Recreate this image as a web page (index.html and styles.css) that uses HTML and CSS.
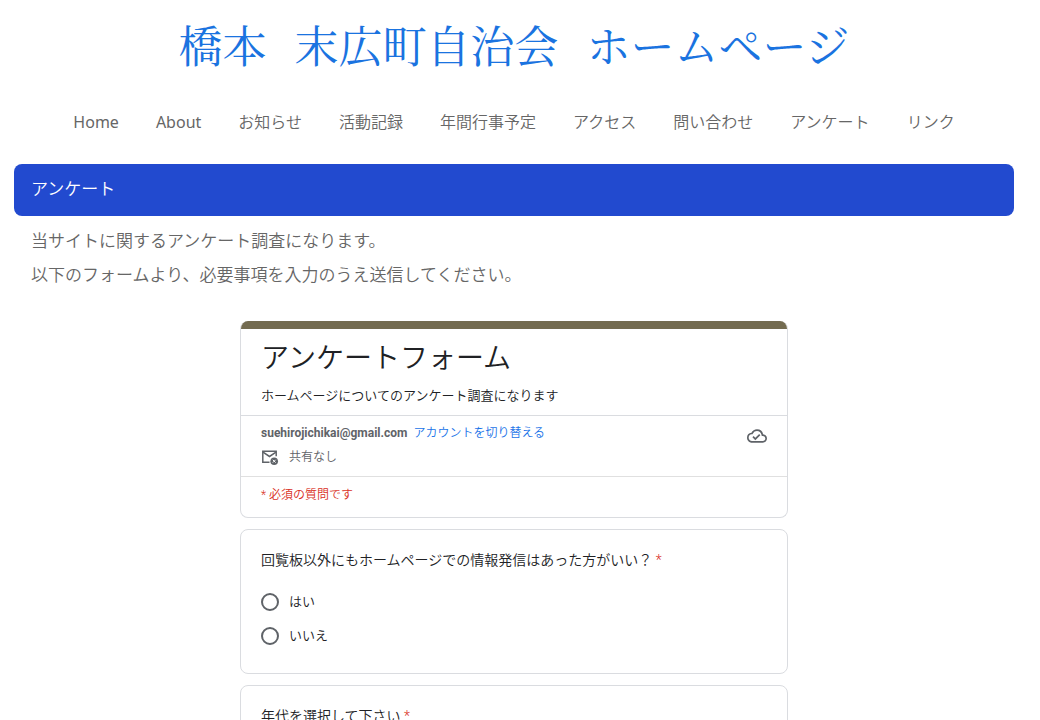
FILE: index.html
```html
<!DOCTYPE html>
<html lang="ja">
<head>
    <meta charset="UTF-8">
    <meta name="viewport" content="width=device-width, initial-scale=1">
    <title>アンケート | 橋本 末広町自治会 ホームページ</title>
    <link rel="stylesheet" href="styles.css">
</head>
<body>
    <header>
        <h1 class="site-title"><span>橋本</span> <span>末広町自治会</span> <span>ホームページ</span></h1>
        <nav class="menu">
            <a href="#" class="en">Home</a>
            <a href="#" class="en">About</a>
            <a href="#">お知らせ</a>
            <a href="#">活動記録</a>
            <a href="#">年間行事予定</a>
            <a href="#">アクセス</a>
            <a href="#">問い合わせ</a>
            <a href="#">アンケート</a>
            <a href="#">リンク</a>
        </nav>
    </header>

    <main>
        <h2 class="page-heading">アンケート</h2>
        <div class="intro">
            <p>当サイトに関するアンケート調査になります。</p>
            <p>以下のフォームより、必要事項を入力のうえ送信してください。</p>
        </div>

        <form class="survey">
            <!-- フォームの概要 -->
            <section class="card form-head">
                <div class="form-title">
                    <h3>アンケートフォーム</h3>
                    <p>ホームページについてのアンケート調査になります</p>
                </div>
                <div class="account">
                    <div>
                        <p class="account-row"><b>suehirojichikai@gmail.com</b><a href="#">アカウントを切り替える</a></p>
                        <p class="account-row share">
                            <svg width="18" height="18" viewBox="0 0 18 18" fill="none" stroke="#5f6368" stroke-width="1.5">
                                <path d="M8.5 14.3H1.8V3.3h13.4v5"/>
                                <path d="M2 4.2l6.5 4.3L15 4.2"/>
                                <circle cx="13.2" cy="13.2" r="3.8" fill="#5f6368" stroke="none"/>
                                <path d="M11.8 11.8l2.8 2.8M14.6 11.8L11.8 14.6" stroke="#fff" stroke-width="1"/>
                            </svg>
                            共有なし
                        </p>
                    </div>
                    <svg class="saved" width="20" height="20" viewBox="0 0 24 24" fill="#5f6368">
                        <path d="M19.35 10.04A7.49 7.49 0 0 0 12 4C9.11 4 6.6 5.64 5.35 8.04A5.994 5.994 0 0 0 0 14c0 3.31 2.69 6 6 6h13c2.76 0 5-2.24 5-5 0-2.64-2.05-4.78-4.65-4.96zM19 18H6c-2.21 0-4-1.79-4-4 0-2.05 1.53-3.76 3.56-3.97l1.07-.11.5-.95A5.469 5.469 0 0 1 12 6c2.62 0 4.88 1.86 5.39 4.43l.3 1.5 1.53.11A2.98 2.98 0 0 1 22 15c0 1.65-1.35 3-3 3zm-9-3.82l-2.09-2.09L6.5 13.5 10 17l6.01-6.01-1.41-1.41z"/>
                    </svg>
                </div>
                <p class="required-note">* 必須の質問です</p>
            </section>

            <!-- 質問 -->
            <fieldset class="card question">
                <legend>回覧板以外にもホームページでの情報発信はあった方がいい？ <span class="required">*</span></legend>
                <label><input type="radio" name="q1" value="yes">はい</label>
                <label><input type="radio" name="q1" value="no">いいえ</label>
            </fieldset>

            <fieldset class="card question">
                <legend>年代を選択して下さい <span class="required">*</span></legend>
            </fieldset>
        </form>
    </main>
</body>
</html>
```

FILE: styles.css
```css
* {
    box-sizing: border-box;
}
body {
    margin: 0;
    padding: 0 26px 0 14px;
    background: #fff;
    color: #666;
    font-family: "Noto Sans", "Noto Sans CJK JP", sans-serif;
    font-weight: 350;
}
h1, h2, h3, p {
    margin: 0;
    font-weight: 350;
}

/* ヘッダー */
.site-title {
    display: flex;
    justify-content: center;
    gap: 28px;
    padding-top: 12px;
    color: #1a73e0;
    font-family: "Noto Serif CJK JP", "Noto Sans CJK JP", serif;
    font-size: 44px;
    font-weight: 400;
    line-height: 64px;
}
.menu {
    display: flex;
    flex-wrap: wrap;
    justify-content: center;
    gap: 0 37px;
    padding: 34px 0 30px;
    font-size: 16px;
    line-height: 24px;
}
.menu a {
    color: #666;
    text-decoration: none;
}
.menu .en {
    font-weight: 400;
}

/* 本文 */
.page-heading {
    padding: 8px 17px 10px;
    border-radius: 8px;
    background: #224acf;
    color: #fff;
    font-size: 17px;
    line-height: 34px;
}
.intro {
    padding: 8px 17px 0;
    font-size: 17px;
    line-height: 34px;
}

/* アンケートフォーム */
.survey {
    max-width: 548px;
    margin: 29px auto 0;
    color: #202124;
    font-family: Roboto, "Noto Sans CJK JP", sans-serif;
    font-size: 13px;
}
.card {
    min-width: 0;
    margin: 0 0 11px;
    border: 1px solid #dadce0;
    border-radius: 8px;
    background: #fff;
}
.form-head {
    overflow: hidden;
    border-top: none;
}
.form-head::before {
    content: "";
    display: block;
    height: 8px;
    background: #736b50;
}
.form-title {
    padding: 10px 20px 9px;
}
.form-title h3 {
    font-size: 28px;
    line-height: 40px;
}
.form-title p {
    padding-top: 7px;
    line-height: 20px;
}
.account {
    display: flex;
    justify-content: space-between;
    padding: 5px 20px 7px;
    border-top: 1px solid #dadce0;
    border-bottom: 1px solid #e0e0e0;
    color: #5f6368;
    font-size: 12px;
}
.account-row {
    line-height: 24px;
}
.account b {
    margin-right: 6px;
    font-weight: 700;
}
.account a {
    color: #1a73e8;
    text-decoration: none;
}
.share {
    display: flex;
    align-items: center;
    gap: 10px;
}
.saved {
    margin-top: 5px;
}
.required-note {
    padding: 8px 20px 12px;
    color: #d93025;
    font-size: 12px;
    line-height: 20px;
}
.question {
    padding: 20px 20px 20px;
}
.question legend {
    float: left;
    width: 100%;
    margin-bottom: 15px;
    padding: 0;
    font-size: 14px;
    line-height: 20px;
}
.question label {
    display: flex;
    clear: both;
    align-items: center;
    gap: 10px;
    line-height: 34px;
}
.question input {
    appearance: none;
    width: 18px;
    height: 18px;
    margin: 0;
    border: 2px solid #5f6368;
    border-radius: 50%;
}
.question input:checked {
    background: #5f6368;
    box-shadow: inset 0 0 0 3px #fff;
}
.required {
    color: #d93025;
}
```
